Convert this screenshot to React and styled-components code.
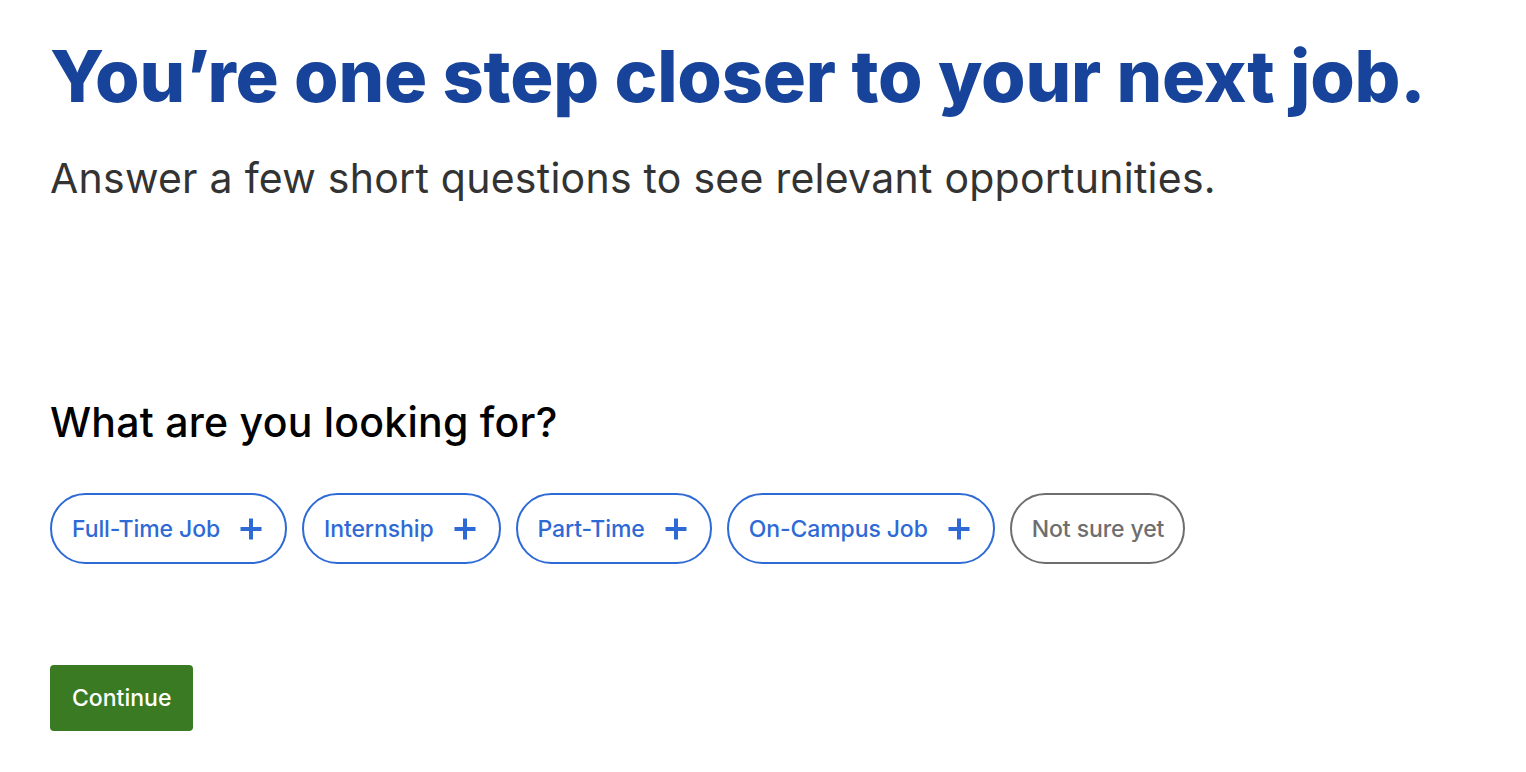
import React from "react";
import styled, { createGlobalStyle } from "styled-components";

const Global = createGlobalStyle`
  html, body { margin: 0; padding: 0; background: #fff; }
  body { font-family: Inter, "Noto Sans", sans-serif; }
`;

const Page = styled.main`
  padding: 32px 50px 40px;
  display: flex;
  flex-direction: column;
`;

const Title = styled.h1`
  margin: 0;
  font-size: 72px;
  line-height: 88px;
  font-weight: 800;
  letter-spacing: -0.2px;
  color: #17449a;
`;

const Subtitle = styled.p`
  margin: 32px 0 0;
  font-size: 41px;
  line-height: 52px;
  font-weight: 400;
  letter-spacing: 0.25px;
  color: #333333;
`;

const Question = styled.h2`
  margin: 194px 0 0;
  font-size: 41px;
  line-height: 48px;
  font-weight: 500;
  letter-spacing: 0.25px;
  color: #000;
`;

const Chips = styled.div`
  display: flex;
  gap: 15px;
  margin-top: 47px;
`;

const Chip = styled.button`
  display: inline-flex;
  align-items: center;
  gap: 20px;
  height: 71px;
  box-sizing: border-box;
  padding: 0 ${(p) => (p.$muted ? "19px" : "23px")} 0 20px;
  border-radius: 36px;
  border: 2px solid ${(p) => (p.$muted ? "#6e6e6e" : "#2e6ad6")};
  background: #fff;
  color: ${(p) => (p.$muted ? "#6e6e6e" : "#2e6ad6")};
  font-family: Inter, "Noto Sans", sans-serif;
  font-size: 23px;
  font-weight: 500;
  letter-spacing: -0.1px;
  cursor: pointer;
`;

const Plus = styled.svg`
  width: 22px;
  height: 22px;
  flex: none;
`;

const ContinueButton = styled.button`
  align-self: flex-start;
  margin-top: 101px;
  height: 66px;
  padding: 0 22px;
  border: none;
  border-radius: 4px;
  background: #3a7a22;
  color: #fff;
  font-family: Inter, "Noto Sans", sans-serif;
  font-size: 23px;
  font-weight: 500;
  cursor: pointer;
`;

const PlusIcon = () => (
  <Plus viewBox="0 0 22 22" aria-hidden="true">
    <path d="M11 0.5v21M0.5 11h21" stroke="currentColor" strokeWidth="4" strokeLinecap="butt" fill="none" />
  </Plus>
);

const options = ["Full-Time Job", "Internship", "Part-Time", "On-Campus Job"];

export default function App() {
  return (
    <>
      <Global />
      <Page>
        <Title>You’re one step closer to your next job.</Title>
        <Subtitle>Answer a few short questions to see relevant opportunities.</Subtitle>
        <Question>What are you looking for?</Question>
        <Chips>
          {options.map((o) => (
            <Chip key={o}>
              {o}
              <PlusIcon />
            </Chip>
          ))}
          <Chip $muted>Not sure yet</Chip>
        </Chips>
        <ContinueButton>Continue</ContinueButton>
      </Page>
    </>
  );
}
